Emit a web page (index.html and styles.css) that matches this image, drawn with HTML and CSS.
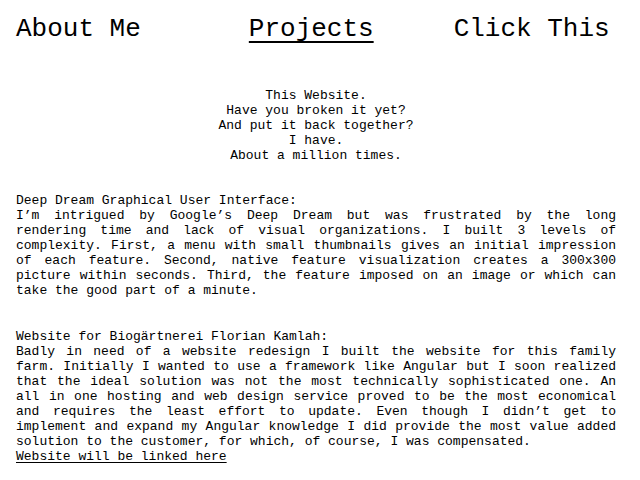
FILE: index.html
```html
<!DOCTYPE html>
<html>
<head>
<meta charset="utf-8">
<link rel="stylesheet" href="styles.css">
</head>
<body>
<nav class="nav">
  <a class="nav-link nav-about">About Me</a>
  <a class="nav-link nav-projects active">Projects</a>
  <a class="nav-link nav-click">Click This</a>
</nav>
<div class="intro">
  This Website.<br>
  Have you broken it yet?<br>
  And put it back together?<br>
  I have.<br>
  About a million times.
</div>
<section class="project">
  <div class="title">Deep Dream Graphical User Interface:</div>
  <p class="desc">I’m intrigued by Google’s Deep Dream but was frustrated by the long rendering time and lack of visual organizations. I built 3 levels of complexity. First, a menu with small thumbnails gives an initial impression of each feature. Second, native feature visualization creates a 300x300 picture within seconds. Third, the feature imposed on an image or which can take the good part of a minute.</p>
</section>
<section class="project">
  <div class="title">Website for Biogärtnerei Florian Kamlah:</div>
  <p class="desc">Badly in need of a website redesign I built the website for this family farm. Initially I wanted to use a framework like Angular but I soon realized that the ideal solution was not the most technically sophisticated one. An all in one hosting and web design service proved to be the most economical and requires the least effort to update. Even though I didn’t get to implement and expand my Angular knowledge I did provide the most value added solution to the customer, for which, of course, I was compensated.</p>
  <a class="link">Website will be linked here</a>
</section>
</body>
</html>
```
FILE: styles.css
```css
html, body {
  margin: 0;
  padding: 0;
  background: #ffffff;
}
body {
  padding: 0 24px 0 16px;
  font-family: "Liberation Mono", monospace;
  color: #000;
  font-size: 13px;
  line-height: 15px;
}
.nav {
  display: flex;
  align-items: baseline;
  padding-top: 14px;
  height: 46px;
  box-sizing: border-box;
  font-size: 26px;
  line-height: 30px;
}
.nav-link {
  color: #000;
  text-decoration: none;
  white-space: nowrap;
}
.nav-projects {
  margin-left: 108px;
}
.nav-click {
  margin-left: 80px;
}
.active {
  text-decoration: underline;
  text-decoration-thickness: 2px;
  text-underline-offset: 5px;
}
.intro {
  text-align: center;
  margin-top: 42px;
}
.project {
  margin-top: 30px;
}
.title {
  margin: 0;
}
.desc {
  margin: 0;
  text-align: justify;
}
.project + .project {
  margin-top: 31px;
}
.link {
  color: #000;
  text-decoration: underline;
  text-underline-offset: 2px;
}
```
